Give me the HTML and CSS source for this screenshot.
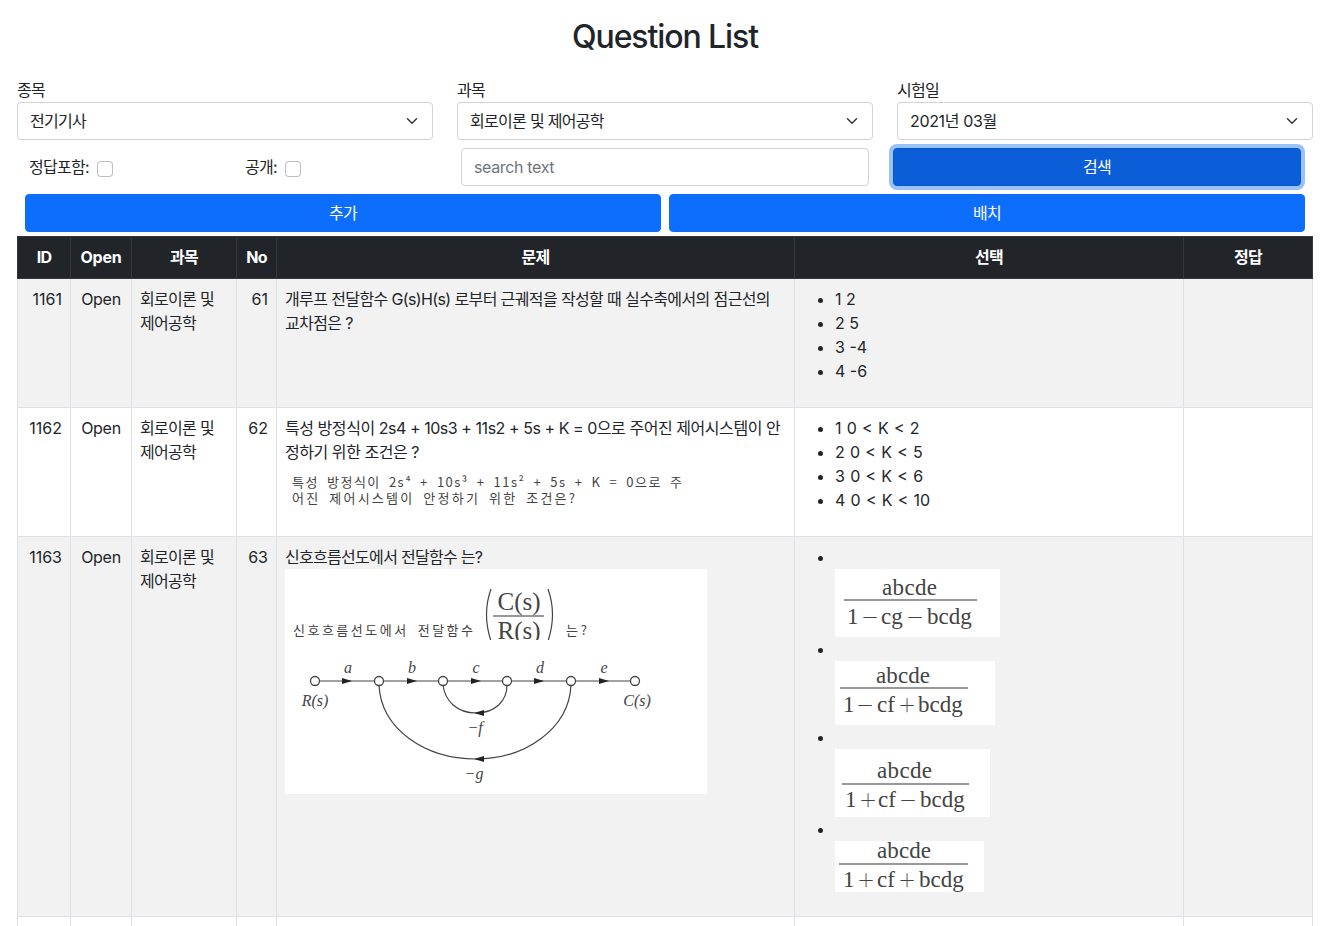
FILE: index.html
```html
<!DOCTYPE html>
<html lang="ko">
<head>
  <meta charset="UTF-8">
  <meta name="viewport" content="width=device-width, initial-scale=1">
  <title>Question List</title>
  <link rel="stylesheet" href="styles.css">
</head>
<body>
  <div class="page">
    <h2 class="page-title">Question List</h2>

    <!-- 검색 조건 -->
    <div class="filters">
      <div class="filter">
        <label class="form-label" for="kind">종목</label>
        <select class="form-select" id="kind"><option>전기기사</option></select>
      </div>
      <div class="filter">
        <label class="form-label" for="subject">과목</label>
        <select class="form-select" id="subject"><option>회로이론 및 제어공학</option></select>
      </div>
      <div class="filter">
        <label class="form-label" for="date">시험일</label>
        <select class="form-select form-date" id="date"><option>2021년 03월</option></select>
      </div>
    </div>

    <div class="search-row">
      <div class="checks">
        <label class="check">정답포함: <input type="checkbox"></label>
        <label class="check">공개: <input type="checkbox"></label>
      </div>
      <div class="search-cell">
        <input class="form-control" type="text" placeholder="search text">
      </div>
      <div class="search-cell">
        <button class="btn btn-focus" type="button">검색</button>
      </div>
    </div>

    <div class="actions">
      <button class="btn" type="button">추가</button>
      <button class="btn" type="button">배치</button>
    </div>

    <!-- 문제 목록 -->
    <table class="questions">
      <colgroup>
        <col class="col-id"><col class="col-open"><col class="col-subject"><col class="col-no">
        <col class="col-question"><col class="col-choice"><col class="col-answer">
      </colgroup>
      <thead>
        <tr><th>ID</th><th class="latin">Open</th><th>과목</th><th>No</th><th>문제</th><th>선택</th><th>정답</th></tr>
      </thead>
      <tbody>
        <tr>
          <td class="num">1161</td>
          <td class="open">Open</td>
          <td>회로이론 및 제어공학</td>
          <td class="num">61</td>
          <td class="keep-words">개루프 전달함수 G(s)H(s) 로부터 근궤적을 작성할 때 실수축에서의 점근선의 교차점은 ?</td>
          <td>
            <ul class="choices">
              <li>1 2</li>
              <li>2 5</li>
              <li>3 -4</li>
              <li>4 -6</li>
            </ul>
          </td>
          <td></td>
        </tr>
        <tr>
          <td class="num">1162</td>
          <td class="open">Open</td>
          <td>회로이론 및 제어공학</td>
          <td class="num">62</td>
          <td class="has-formula">
            특성 방정식이 2s4 + 10s3 + 11s2 + 5s + K = 0으로 주어진 제어시스템이 안정하기 위한 조건은 ?
            <svg class="scan scan-equation" viewBox="0 0 410 56">
              <text class="scan-ko" x="7" y="23" textLength="390">특성 방정식이 2s⁴ + 10s³ + 11s² + 5s + K = 0으로 주</text>
              <text class="scan-ko" x="7" y="39" textLength="283">어진 제어시스템이 안정하기 위한 조건은?</text>
            </svg>
          </td>
          <td>
            <ul class="choices choices-wide">
              <li>1 0 &lt; K &lt; 2</li>
              <li>2 0 &lt; K &lt; 5</li>
              <li>3 0 &lt; K &lt; 6</li>
              <li>4 0 &lt; K &lt; 10</li>
            </ul>
          </td>
          <td></td>
        </tr>
        <tr>
          <td class="num">1163</td>
          <td class="open">Open</td>
          <td>회로이론 및 제어공학</td>
          <td class="num">63</td>
          <td>
            신호흐름선도에서 전달함수 는?
            <svg class="scan scan-flow" viewBox="0 0 422 225">
              <text class="scan-ko" x="8" y="66" textLength="180">신호흐름선도에서 전달함수</text>
              <text class="scan-ko" x="281" y="66" textLength="21">는?</text>
              <!-- 전달함수 분수 (아래쪽이 잘린 그림) -->
              <svg x="195" y="15" width="80" height="56" viewBox="195 15 80 56">
                <path class="wire" d="M206 20Q197 45 206 72M263 20Q272 45 263 72"/>
                <text class="math-big" x="234" y="41" textLength="43">C(s)</text>
                <path class="frac-bar" d="M208 47H259"/>
                <text class="math-big" x="234" y="70" textLength="43">R(s)</text>
              </svg>
              <!-- 신호흐름선도 -->
              <path class="wire" d="M30 112H350"/>
              <path class="wire" d="M158 116C160 132 172 144 191 144C210 144 222 132 222 116"/>
              <path class="wire" d="M94 116C96 160 140 190 191 190C240 190 284 160 286 116"/>
              <path class="arrow" d="M57 109L67 112L57 115Z"/>
              <path class="arrow" d="M122 109L132 112L122 115Z"/>
              <path class="arrow" d="M186 109L196 112L186 115Z"/>
              <path class="arrow" d="M249 109L259 112L249 115Z"/>
              <path class="arrow" d="M314 109L324 112L314 115Z"/>
              <path class="arrow" d="M199 141L189 144L199 147Z"/>
              <path class="arrow" d="M199 187L189 190L199 193Z"/>
              <circle class="node" cx="30" cy="112" r="4.5"/>
              <circle class="node" cx="94" cy="112" r="4.5"/>
              <circle class="node" cx="158" cy="112" r="4.5"/>
              <circle class="node" cx="222" cy="112" r="4.5"/>
              <circle class="node" cx="286" cy="112" r="4.5"/>
              <circle class="node" cx="350" cy="112" r="4.5"/>
              <text class="math" x="63" y="104">a</text>
              <text class="math" x="127" y="104">b</text>
              <text class="math" x="191" y="104">c</text>
              <text class="math" x="255" y="104">d</text>
              <text class="math" x="319" y="104">e</text>
              <text class="math" x="30" y="137">R(s)</text>
              <text class="math" x="352" y="137">C(s)</text>
              <text class="math" x="190" y="164">−f</text>
              <text class="math" x="189" y="210">−g</text>
            </svg>
          </td>
          <td>
            <ul class="choices">
              <li><br>
                <svg class="scan frac-1" viewBox="0 0 165 68">
                  <text class="frac" x="47" y="26" textLength="55">abcde</text>
                  <path class="frac-bar" d="M9 31H142"/>
                  <text class="frac" y="55"><tspan x="12">1</tspan><tspan class="op" x="26">－</tspan><tspan x="46">cg</tspan><tspan class="op" x="71">－</tspan><tspan x="92">bcdg</tspan></text>
                </svg>
              </li>
              <li><br>
                <svg class="scan frac-2" viewBox="0 0 160 64">
                  <text class="frac" x="41" y="22" textLength="54">abcde</text>
                  <path class="frac-bar" d="M5 27H133"/>
                  <text class="frac" y="51"><tspan x="8">1</tspan><tspan class="op" x="21">－</tspan><tspan x="42">cf</tspan><tspan class="op" x="63">＋</tspan><tspan x="83">bcdg</tspan></text>
                </svg>
              </li>
              <li><br>
                <svg class="scan frac-3" viewBox="0 0 155 68">
                  <text class="frac" x="42" y="29" textLength="55">abcde</text>
                  <path class="frac-bar" d="M7 35H134"/>
                  <text class="frac" y="58"><tspan x="10">1</tspan><tspan class="op" x="24">＋</tspan><tspan x="43">cf</tspan><tspan class="op" x="64">－</tspan><tspan x="85">bcdg</tspan></text>
                </svg>
              </li>
              <li><br>
                <svg class="scan frac-4" viewBox="0 0 149 51">
                  <text class="frac" x="42" y="17" textLength="54">abcde</text>
                  <path class="frac-bar" d="M4 23H133"/>
                  <text class="frac" y="46"><tspan x="8">1</tspan><tspan class="op" x="22">＋</tspan><tspan x="42">cf</tspan><tspan class="op" x="63">＋</tspan><tspan x="84">bcdg</tspan></text>
                </svg>
              </li>
            </ul>
          </td>
          <td></td>
        </tr>
        <tr class="cut-row">
          <td></td><td></td><td></td><td></td><td></td><td></td><td></td>
        </tr>
      </tbody>
    </table>
  </div>
</body>
</html>
```

FILE: styles.css
```css
* {
  box-sizing: border-box;
}

html, body {
  margin: 0;
  height: 100%;
  overflow: hidden;
}

body {
  font-family: Inter, "Noto Sans CJK KR", sans-serif;
  font-size: 16px;
  line-height: 24px;
  letter-spacing: -0.7px;
  color: #212529;
  background: #fff;
}

.page {
  padding: 18px 15px 0 17px;
}

.page-title {
  margin: 0 0 21px;
  font-size: 32px;
  font-weight: 500;
  line-height: 38px;
  letter-spacing: -1.1px;
  text-align: center;
}

/* 검색 조건 */
.filters {
  display: grid;
  grid-template-columns: repeat(3, 1fr);
  gap: 24px;
  margin-bottom: 8px;
}

.form-label {
  display: block;
  padding-top: 1px;
}

.form-select,
.form-control {
  display: block;
  width: 100%;
  height: 38px;
  padding: 6px 12px;
  font: inherit;
  letter-spacing: inherit;
  color: #212529;
  background-color: #fff;
  border: 1px solid #ced4da;
  border-radius: 4px;
  appearance: none;
}

.form-select {
  padding-right: 36px;
  background-image: url("data:image/svg+xml,%3csvg xmlns='http://www.w3.org/2000/svg' viewBox='0 0 16 16'%3e%3cpath fill='none' stroke='%23343a40' stroke-linecap='round' stroke-linejoin='round' stroke-width='2' d='M2 5l6 6 6-6'/%3e%3c/svg%3e");
  background-repeat: no-repeat;
  background-position: right 12px center;
  background-size: 16px 12px;
}

.form-date,
.form-control {
  letter-spacing: -0.35px;
}

.form-control::placeholder {
  color: #6c757d;
  opacity: 1;
}

.search-row {
  display: grid;
  grid-template-columns: repeat(3, 1fr);
  margin-bottom: 8px;
}

.checks {
  display: grid;
  grid-template-columns: 1fr 1fr;
  align-items: center;
}

.check {
  display: flex;
  align-items: center;
  gap: 8px;
  padding: 0 12px;
}

.check input {
  width: 16px;
  height: 16px;
  margin: 3px 0 0;
  border: 1px solid rgba(0, 0, 0, .25);
  border-radius: 4px;
  background: #fff;
  appearance: none;
}

.search-cell {
  padding: 0 12px;
}

.btn {
  display: block;
  width: 100%;
  height: 38px;
  padding: 6px 12px;
  font: inherit;
  letter-spacing: inherit;
  color: #fff;
  background: #0d6efd;
  border: 1px solid #0d6efd;
  border-radius: 4px;
}

.btn-focus {
  background: #0b5ed7;
  border-color: #0a58ca;
  box-shadow: 0 0 0 4px rgba(49, 132, 253, .5);
}

.actions {
  display: grid;
  grid-template-columns: 1fr 1fr;
  gap: 8px;
  padding: 0 8px;
  margin-bottom: 4px;
}

/* 문제 목록 */
.questions {
  width: calc(100% - 1px);
  table-layout: fixed;
  border-collapse: collapse;
}

.col-id { width: 53px; }
.col-open { width: 61px; }
.col-subject { width: 105px; }
.col-no { width: 40px; }
.col-question { width: 518px; }
.col-choice { width: 389px; }
.col-answer { width: 129px; }

.questions th,
.questions td {
  padding: 8px;
  border: 1px solid #dee2e6;
  vertical-align: top;
}

.questions th {
  color: #fff;
  font-weight: 700;
  text-align: center;
  background: #212529;
  border-color: #32383e;
  height: 42px;
}

.questions th.latin {
  letter-spacing: -0.2px;
}

.questions tbody tr:nth-child(odd) td {
  background: #f2f2f2;
}

.questions .num {
  text-align: right;
  letter-spacing: 0;
}

.questions .open {
  text-align: center;
  letter-spacing: -0.3px;
}

.questions .keep-words {
  word-break: keep-all;
  letter-spacing: -0.62px;
}

.questions .has-formula {
  letter-spacing: -0.45px;
}

.cut-row td {
  height: 60px;
}

.choices {
  margin: 0 0 16px;
  padding-left: 32px;
  letter-spacing: 0;
}

.choices-wide {
  word-spacing: 0.75px;
}

/* 스캔한 문제 그림 */
.scan {
  display: block;
  background: #fff;
  letter-spacing: 0;
  overflow: visible;
}

.scan-equation { width: 410px; height: 56px; }
.scan-flow { width: 422px; height: 225px; }
.frac-1 { width: 165px; height: 68px; }
.frac-2 { width: 160px; height: 64px; }
.frac-3 { width: 155px; height: 68px; }
.frac-4 { width: 149px; height: 51px; }

.scan text {
  fill: #444;
}

.scan-ko {
  font-family: "Noto Sans CJK KR", sans-serif;
  font-size: 13px;
  font-weight: 400;
  word-spacing: 3px;
}

.math {
  font-family: "Liberation Serif", serif;
  font-size: 16px;
  font-style: italic;
  text-anchor: middle;
}

.math-big {
  font-family: "Liberation Serif", serif;
  font-size: 25px;
  text-anchor: middle;
}

.frac {
  font-family: "Liberation Serif", serif;
  font-size: 23px;
}

.frac .op {
  font-family: "Noto Sans CJK KR", sans-serif;
  font-size: 18px;
  font-weight: 300;
}

.frac-bar {
  fill: none;
  stroke: #333;
  stroke-width: 1;
}

.wire {
  fill: none;
  stroke: #444;
  stroke-width: 1.2;
}

.arrow {
  fill: #222;
}

.node {
  fill: #fff;
  stroke: #444;
  stroke-width: 1.3;
}
```
